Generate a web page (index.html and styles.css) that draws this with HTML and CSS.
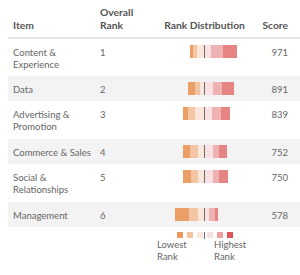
FILE: index.html
```html
<!DOCTYPE html>
<html>
<head>
<meta charset="utf-8">
<link rel="stylesheet" href="styles.css">
</head>
<body>
<table class="rank-table">
  <colgroup>
    <col class="c-item"><col class="c-rank"><col class="c-dist"><col class="c-score">
  </colgroup>
  <thead>
    <tr>
      <th class="item">Item</th>
      <th class="rank">Overall<br>Rank</th>
      <th class="dist">Rank Distribution</th>
      <th class="score">Score</th>
    </tr>
  </thead>
  <tbody>
    <tr class="tall">
      <td class="item">Content &amp; Experience</td>
      <td class="rank">1</td>
      <td class="dist"><div class="bar">
        <div class="neg"><span class="s1" style="width:2.7px"></span><span class="s2" style="width:4px"></span><span class="s3" style="width:7.3px"></span></div>
        <i class="mid"></i>
        <div class="pos"><span class="s4" style="width:6.3px"></span><span class="s5" style="width:11.4px"></span><span class="s6" style="width:14.6px"></span></div>
      </div></td>
      <td class="score">971</td>
    </tr>
    <tr class="short alt">
      <td class="item">Data</td>
      <td class="rank">2</td>
      <td class="dist"><div class="bar">
        <div class="neg"><span class="s1" style="width:7px"></span><span class="s2" style="width:5.6px"></span><span class="s3" style="width:3.7px"></span></div>
        <i class="mid"></i>
        <div class="pos"><span class="s4" style="width:8.3px"></span><span class="s5" style="width:8.4px"></span><span class="s6" style="width:12.3px"></span></div>
      </div></td>
      <td class="score">891</td>
    </tr>
    <tr class="tall">
      <td class="item">Advertising &amp; Promotion</td>
      <td class="rank">3</td>
      <td class="dist"><div class="bar">
        <div class="neg"><span class="s1" style="width:4.4px"></span><span class="s2" style="width:7.3px"></span><span class="s3" style="width:9px"></span></div>
        <i class="mid"></i>
        <div class="pos"><span class="s4" style="width:7.3px"></span><span class="s5" style="width:8.4px"></span><span class="s6" style="width:9.3px"></span></div>
      </div></td>
      <td class="score">839</td>
    </tr>
    <tr class="short alt">
      <td class="item">Commerce &amp; Sales</td>
      <td class="rank">4</td>
      <td class="dist"><div class="bar">
        <div class="neg"><span class="s1" style="width:6.7px"></span><span class="s2" style="width:8px"></span><span class="s3" style="width:6px"></span></div>
        <i class="mid"></i>
        <div class="pos"><span class="s4" style="width:7.7px"></span><span class="s5" style="width:6.6px"></span><span class="s6" style="width:8px"></span></div>
      </div></td>
      <td class="score">752</td>
    </tr>
    <tr class="tall">
      <td class="item">Social &amp; Relationships</td>
      <td class="rank">5</td>
      <td class="dist"><div class="bar">
        <div class="neg"><span class="s1" style="width:7.4px"></span><span class="s2" style="width:7.3px"></span><span class="s3" style="width:6px"></span></div>
        <i class="mid"></i>
        <div class="pos"><span class="s4" style="width:8.3px"></span><span class="s5" style="width:6px"></span><span class="s6" style="width:8.4px"></span></div>
      </div></td>
      <td class="score">750</td>
    </tr>
    <tr class="short alt">
      <td class="item">Management</td>
      <td class="rank">6</td>
      <td class="dist"><div class="bar">
        <div class="neg"><span class="s1" style="width:13.7px"></span><span class="s2" style="width:9.3px"></span><span class="s3" style="width:6px"></span></div>
        <i class="mid"></i>
        <div class="pos"><span class="s4" style="width:4px"></span><span class="s5" style="width:5.7px"></span><span class="s6" style="width:3px"></span></div>
      </div></td>
      <td class="score">578</td>
    </tr>
  </tbody>
  <tfoot>
    <tr>
      <td></td>
      <td></td>
      <td class="legend-cell">
        <div class="legend">
          <div class="neg"><span class="s1"></span><span class="s2"></span><span class="s3"></span></div>
          <i class="mid"></i>
          <div class="pos"><span class="s4"></span><span class="s5"></span><span class="s6"></span></div>
        </div>
        <div class="legend-labels">
          <span>Lowest<br>Rank</span>
          <span>Highest<br>Rank</span>
        </div>
      </td>
      <td></td>
    </tr>
  </tfoot>
</table>
</body>
</html>
```
FILE: styles.css
```css
html, body {
  background: #ffffff;
}
body {
  margin: 6px 0 0 8px;
  font-family: Lato, "Open Sans", sans-serif;
  color: #666666;
}
.rank-table {
  width: 292px;
  border-collapse: collapse;
  table-layout: fixed;
}
.c-item { width: 87px; }
.c-rank { width: 55px; }
.c-dist { width: 109px; }
.c-score { width: 41px; }

th {
  font-size: 10.3px;
  line-height: 13px;
  font-weight: bold;
  color: #555555;
  text-align: left;
  vertical-align: bottom;
  padding: 0 5px 5px 5px;
  border-bottom: 2px solid #e6e6e6;
}
th.dist { text-align: center; padding: 0 0 5px 0; }
th.score, td.score { text-align: right; padding-right: 12px; padding-left: 0; }

td {
  font-size: 9.5px;
  line-height: 11.5px;
  vertical-align: top;
  padding: 8px 2px 0 5px;
}
tr.tall { height: 38px; }
tr.short { height: 25px; }
tr.alt td { background: #f3f3f3; }

td.dist { padding: 6px 0 0 0; }

.bar, .legend {
  display: grid;
  grid-template-columns: 1fr 1px 1fr;
  width: 109px;
}
.bar { height: 13px; }
.neg, .pos { display: flex; }
.neg { justify-content: flex-end; }
.pos { justify-content: flex-start; }
.bar span { display: block; height: 13px; }
.mid { display: block; background: #6e6e6e; }

.s1 { background: #eb9e66; }
.s2 { background: #f3c5a5; }
.s3 { background: #f8e7da; }
.s4 { background: #f9e0e3; }
.s5 { background: #efb2b2; }
.s6 { background: #e68484; }

.legend-cell { padding: 5px 0 0 0; vertical-align: top; }
.legend { height: 6.6px; }
.legend span { display: block; width: 6px; height: 6px; }
.legend .neg { gap: 4px; padding-right: 1.4px; }
.legend .pos { gap: 4px; padding-left: 1.7px; }
.legend .s1 { background: #ea985c; }
.legend .s2 { background: #f4c4a2; }
.legend .s5 { background: #eda0a0; }
.legend .s6 { background: #e05555; }

.legend-labels {
  display: grid;
  grid-template-columns: 57px auto;
  padding-left: 7px;
  font-size: 9.5px;
  line-height: 12.5px;
  color: #666666;
}
```
